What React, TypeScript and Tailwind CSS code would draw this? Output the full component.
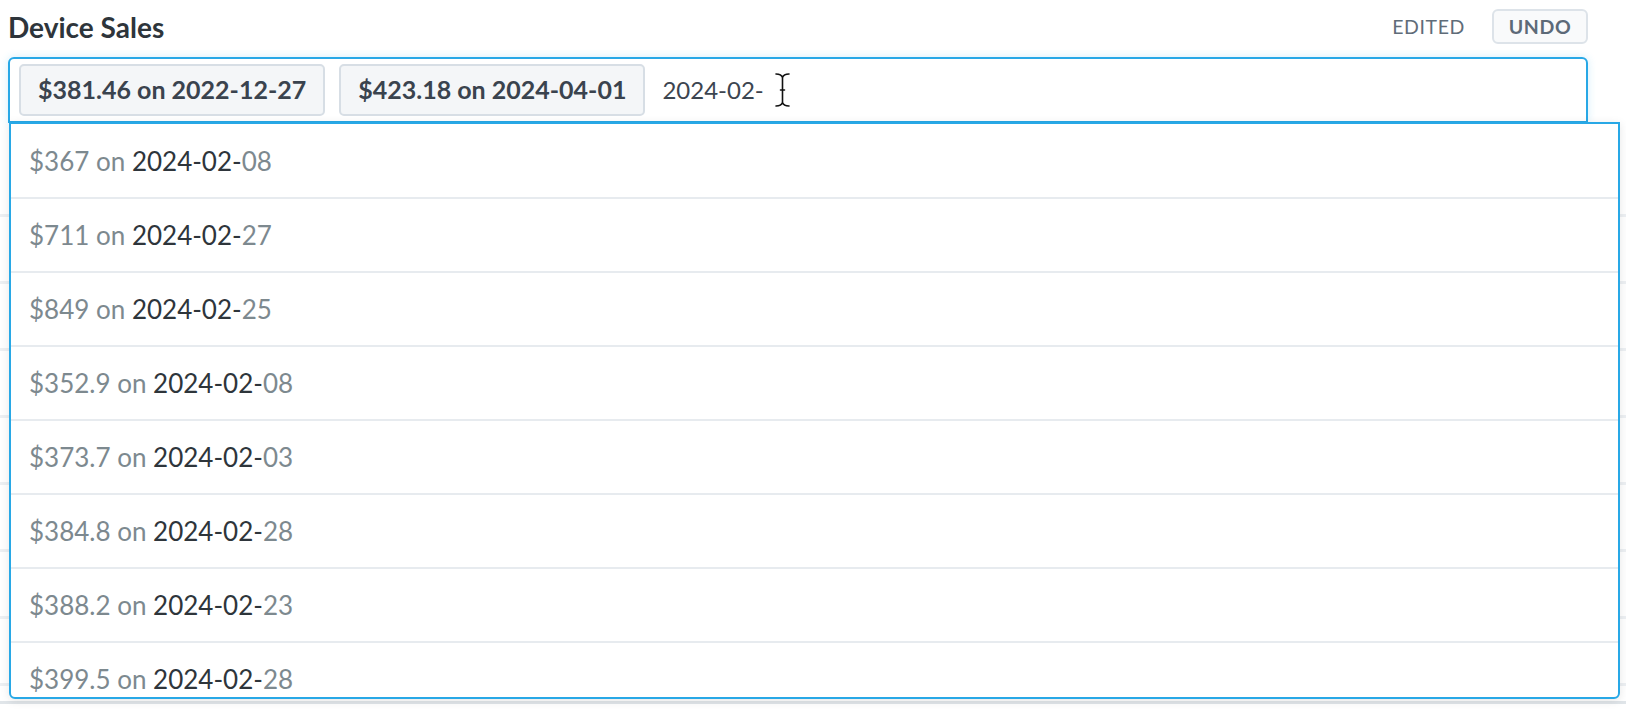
import React from "react";

const rows: { amount: string; day: string }[] = [
  { amount: "$367", day: "08" },
  { amount: "$711", day: "27" },
  { amount: "$849", day: "25" },
  { amount: "$352.9", day: "08" },
  { amount: "$373.7", day: "03" },
  { amount: "$384.8", day: "28" },
  { amount: "$388.2", day: "23" },
  { amount: "$399.5", day: "28" },
];

function IBeam() {
  return (
    <svg width="17" height="36" viewBox="0 0 17 36" className="ml-[10px] shrink-0">
      <g fill="none" strokeLinecap="round">
        <path
          d="M2 2 C5 2 7.5 2.5 8.5 5.5 C9.5 2.5 12 2 15 2 M8.5 5.5 L8.5 30.5 M2 34 C5 34 7.5 33.5 8.5 30.5 C9.5 33.5 12 34 15 34 M6.5 18 L10.5 18"
          stroke="#ffffff"
          strokeWidth="3.2"
        />
        <path
          d="M2 2 C5 2 7.5 2.5 8.5 5.5 C9.5 2.5 12 2 15 2 M8.5 5.5 L8.5 30.5 M2 34 C5 34 7.5 33.5 8.5 30.5 C9.5 33.5 12 34 15 34 M6.5 18 L10.5 18"
          stroke="#111111"
          strokeWidth="1.6"
        />
      </g>
    </svg>
  );
}

export default function App() {
  return (
    <div
      className="relative h-[712px] w-[1626px] overflow-hidden bg-white"
      style={{ fontFamily: "Lato, 'Noto Sans', sans-serif" }}
    >
      {/* header */}
      <div className="flex h-[53px] items-center justify-between pl-2 pr-[38px]">
        <h1 className="text-[28px] font-bold leading-none text-[#2e353b]">Device Sales</h1>
        <div className="flex items-center gap-[27px]">
          <span className="text-[19.5px] tracking-[0.6px] text-[#5f6c79]">EDITED</span>
          <button className="flex h-[35px] w-[96px] items-center justify-center rounded-[6px] border-2 border-[#dde3e9] bg-[#f9fafb] text-[19.5px] font-bold tracking-[0.6px] text-[#5d6a78]">
            UNDO
          </button>
        </div>
      </div>

      {/* input + dropdown */}
      <div className="relative z-10 ml-2 mt-1 w-[1580px]">
        <div className="flex h-[66px] items-center gap-[14px] rounded-t-[6px] border-2 border-[#28a8e6] bg-white pl-[9px] shadow-[0_0_8px_rgba(40,168,230,0.2)]">
          <span className="flex h-[52px] items-center rounded-[5px] border-2 border-[#d7dee5] bg-[#f4f6f8] px-[17px] text-[25px] font-bold text-[#3a434e]">
            $381.46 on 2022-12-27
          </span>
          <span className="flex h-[52px] items-center rounded-[5px] border-2 border-[#d7dee5] bg-[#f4f6f8] px-[17px] text-[25px] font-bold text-[#3a434e]">
            $423.18 on 2024-04-01
          </span>
          <span className="ml-[3px] flex items-center text-[24px] text-[#3c4550]">
            2024-02-
            <IBeam />
          </span>
        </div>

        <div className="absolute left-[1px] top-[65px] h-[577px] w-[1611px] overflow-hidden rounded-b-[6px] border-2 border-[#28a8e6] bg-white shadow-[0_2px_10px_rgba(0,0,0,0.10)]">
          <div className="h-px" />
          {rows.map((r, i) => (
            <div
              key={i}
              className="flex h-[74px] shrink-0 items-center border-b-2 border-[#e7ebef] pl-[18px] text-[26px] text-[#7d898f]"
            >
              <span>{r.amount} on&nbsp;</span>
              <span className="text-[#2e353b]">2024-02-</span>
              <span>{r.day}</span>
            </div>
          ))}
        </div>
      </div>

      {/* background table (mostly hidden under the dropdown) */}
      <div className="h-[581px] w-full border-b-[3px] border-[#e0e5e9]">
        <div className="h-[27px]" />
        {Array.from({ length: 8 }).map((_, i) => (
          <div key={i} className="h-[67px] border-b-[3px] border-[#edf0f3]" />
        ))}
      </div>
    </div>
  );
}
